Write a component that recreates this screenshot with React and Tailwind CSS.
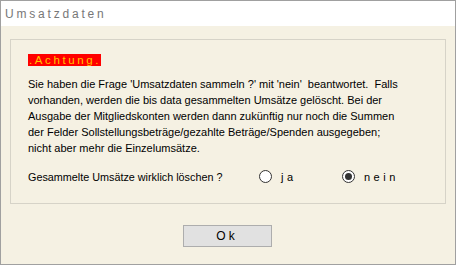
import React from 'react';

const lines = [
  "Sie haben die Frage 'Umsatzdaten sammeln ?' mit 'nein'\u00a0 beantwortet.\u00a0 Falls",
  'vorhanden, werden die bis data gesammelten Umsätze gelöscht. Bei der',
  'Ausgabe der Mitgliedskonten werden dann zukünftig nur noch die Summen',
  'der Felder Sollstellungsbeträge/gezahlte Beträge/Spenden ausgegeben;',
  'nicht aber mehr die Einzelumsätze.',
];

function Radio({ checked, label, width }) {
  return (
    <label className={`flex items-center gap-[9px] ${width}`}>
      <span className="w-[13px] h-[13px] rounded-full border border-[#333] bg-white flex items-center justify-center">
        {checked && <span className="w-[7px] h-[7px] rounded-full bg-[#333]"></span>}
      </span>
      <span className="tracking-[3.5px]">{label}</span>
    </label>
  );
}

export default function App() {
  return (
    <div className="w-[456px] h-[265px] bg-[#f5f1e3] border border-[#a0a0a0] flex flex-col text-black font-['Liberation_Sans',Arial,sans-serif]">
      <div className="h-[25px] bg-white flex items-center pl-[4px] text-[12px] tracking-[2.8px] text-[#777]">
        Umsatzdaten
      </div>
      <div className="flex-1 flex flex-col pt-[13px] px-[9px]">
        <div className="h-[165px] border border-[#d6d3c8] pl-[17px] pt-[12px] text-[11px]">
          <span className="inline-block bg-[#ff0000] text-[#ffc400] text-[11.5px] tracking-[2.6px] leading-[12px] h-[12px] pl-[1px]">.Achtung.</span>
          <div className="mt-[7px] leading-[16px]">
            {lines.map((l) => (
              <div key={l}>{l}</div>
            ))}
          </div>
          <div className="mt-[13px] flex items-center">
            <span className="w-[231px] text-[10.8px]">Gesammelte Umsätze wirklich löschen ?</span>
            <Radio label="ja" width="w-[83px]" />
            <Radio checked label="nein" width="" />
          </div>
        </div>
        <div className="flex justify-center mt-[21px] pr-[2px]">
          <button className="w-[89px] h-[22px] bg-[#e1e1e1] border border-[#adadad] text-[12px] tracking-[3px]">Ok</button>
        </div>
      </div>
    </div>
  );
}
